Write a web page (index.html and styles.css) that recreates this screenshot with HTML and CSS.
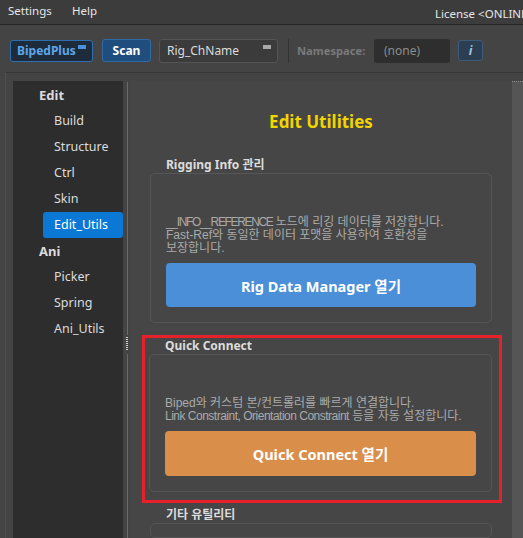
FILE: index.html
```html
<!DOCTYPE html>
<html>
<head>
<meta charset="utf-8">
<link rel="stylesheet" href="styles.css">
</head>
<body>
<div class="app">
  <div class="menubar">
    <div class="menus">
      <span class="menu menu-first">Settings</span>
      <span class="menu">Help</span>
    </div>
    <span class="license">License &lt;ONLINE&gt;</span>
  </div>
  <div class="toolbar">
    <div class="combo combo-blue">BipedPlus<span class="ind ind-blue"></span></div>
    <div class="btn-scan">Scan</div>
    <div class="combo combo-dark">Rig_ChName<span class="ind ind-grey"></span></div>
    <div class="sep"></div>
    <span class="ns-label">Namespace:</span>
    <div class="ns-field">(none)</div>
    <div class="btn-info">i</div>
  </div>
  <div class="main">
    <div class="sidebar">
      <div class="group">Edit</div>
      <div class="item">Build</div>
      <div class="item">Structure</div>
      <div class="item">Ctrl</div>
      <div class="item">Skin</div>
      <div class="item selected">Edit_Utils</div>
      <div class="group">Ani</div>
      <div class="item">Picker</div>
      <div class="item">Spring</div>
      <div class="item">Ani_Utils</div>
    </div>
    <div class="splitter">
      <div class="split-line top"></div>
      <div class="grip"></div>
      <div class="split-line bottom"></div>
    </div>
    <div class="content">
      <div class="title">Edit Utilities</div>
      <div class="sec-label">Rigging Info 관리</div>
      <div class="card">
        <div class="desc"><span class="caps">__INFO__REFERENCE</span> 노드에 리깅 데이터를 저장합니다.<br>Fast-Ref와 동일한 데이터 포맷을 사용하여 호환성을<br>보장합니다.</div>
        <div class="action action-blue">Rig Data Manager 열기</div>
      </div>
      <div class="highlight">
        <div class="sec-label">Quick Connect</div>
        <div class="card">
          <div class="desc">Biped와 커스텀 본/컨트롤러를 빠르게 연결합니다.<br><span class="latin">Link Constraint, Orientation Constraint</span> 등을 자동 설정합니다.</div>
          <div class="action action-orange">Quick Connect 열기</div>
        </div>
      </div>
      <div class="sec-label sec-last">기타 유틸리티</div>
      <div class="card card-open"></div>
    </div>
    <div class="scrollbar"></div>
  </div>
</div>
</body>
</html>
```
FILE: styles.css
```css
html, body {
  margin: 0;
  padding: 0;
}
body {
  width: 523px;
  height: 538px;
  overflow: hidden;
  background: #444444;
  font-family: "Noto Sans", "Noto Sans CJK KR", sans-serif;
  color: #dddddd;
}
.app {
  display: flex;
  flex-direction: column;
  height: 538px;
}
.menubar {
  height: 24px;
  background: #3c3c3c;
  border-bottom: 1px solid #262626;
  display: flex;
  font-size: 11.5px;
  color: #e6e6e6;
}
.menus {
  display: flex;
  flex: 0 0 435px;
  box-sizing: border-box;
  padding-left: 8px;
  line-height: 21px;
}
.menu-first {
  width: 64px;
}
.license {
  flex-shrink: 0;
  line-height: 27px;
  white-space: nowrap;
}
.toolbar {
  height: 47px;
  display: flex;
  align-items: center;
  padding-left: 10px;
  font-size: 12px;
  box-sizing: border-box;
  padding-top: 4px;
}
.combo {
  position: relative;
  height: 22px;
  box-sizing: border-box;
  border-radius: 3px;
  display: flex;
  align-items: center;
}
.combo-blue {
  width: 83px;
  background: #1d2b3b;
  border: 1px solid #2e6fb0;
  color: #5ea6e8;
  font-weight: bold;
  padding-left: 6px;
}
.ind {
  position: absolute;
  width: 8px;
  height: 4px;
  top: 4px;
}
.ind-blue {
  background: #4a92dc;
  right: 6px;
}
.ind-grey {
  background: #a9a9a9;
  right: 6px;
  top: 5px;
}
.btn-scan {
  margin-left: 9px;
  width: 49px;
  height: 23px;
  box-sizing: border-box;
  background: #1f4e7e;
  border: 1px solid #2f6aa5;
  border-radius: 3px;
  color: #ffffff;
  font-weight: bold;
  display: flex;
  align-items: center;
  justify-content: center;
}
.combo-dark {
  margin-left: 8px;
  width: 119px;
  height: 24px;
  background: #3b3b3b;
  border: 1px solid #555555;
  color: #dcdcdc;
  padding-left: 7px;
}
.sep {
  width: 1px;
  height: 24px;
  background: #333333;
  margin-left: 10px;
}
.ns-label {
  margin-left: 8px;
  color: #7a7a7a;
  font-weight: bold;
  font-size: 11.2px;
  width: 70px;
}
.ns-field {
  margin-left: 7px;
  width: 76px;
  height: 24px;
  background: #2e2e2e;
  border-radius: 3px;
  color: #8c8c8c;
  display: flex;
  align-items: center;
  padding-left: 10px;
  box-sizing: border-box;
}
.btn-info {
  margin-left: 8px;
  width: 25px;
  height: 21px;
  box-sizing: border-box;
  background: #2b3e52;
  border: 1px solid #3e5c7a;
  border-radius: 3px;
  color: #a9c3df;
  font-style: italic;
  font-weight: bold;
  display: flex;
  align-items: center;
  justify-content: center;
}
.main {
  flex: 1;
  margin-left: 5px;
  border-top: 1px solid #363636;
  border-left: 1px solid #505050;
  display: flex;
  padding: 8px 0 0 7px;
  min-height: 0;
}
.sidebar {
  width: 110px;
  background: #2d2d2d;
  font-size: 12.5px;
  color: #dcdcdc;
  padding-top: 1px;
}
.group {
  height: 26px;
  line-height: 26px;
  padding-left: 26px;
  font-weight: bold;
  font-size: 13px;
}
.item {
  height: 26px;
  line-height: 26px;
  padding-left: 41px;
}
.item.selected {
  margin-left: 30px;
  padding-left: 11px;
  background: #0a78d4;
  border-radius: 3px;
  color: #ffffff;
}
.splitter {
  width: 8px;
  display: flex;
  flex-direction: column;
  align-items: center;
}
.split-line {
  width: 1px;
  background: #6a6a6a;
}
.split-line.top {
  height: 253px;
  margin-top: 1px;
}
.split-line.bottom {
  flex: 1;
  margin-top: 3px;
}
.grip {
  width: 2px;
  height: 14px;
  margin-top: 2px;
  background: repeating-linear-gradient(to bottom, #cfcfcf 0, #cfcfcf 1px, transparent 1px, transparent 2px);
}
.content {
  width: 381px;
  background: #464646;
  padding: 29px 20px 0 19px;
  box-sizing: border-box;
  display: flex;
  flex-direction: column;
  overflow: hidden;
}
.title {
  text-align: center;
  color: #f2d400;
  font-weight: bold;
  font-size: 17px;
  line-height: 24px;
  height: 24px;
  margin-bottom: 23px;
}
.sec-label {
  font-size: 12px;
  font-weight: bold;
  color: #dcdcdc;
  line-height: 16px;
  height: 16px;
  padding-left: 16px;
}
.card {
  border: 1px solid #565656;
  border-radius: 5px;
  padding: 42px 15px 15px 15px;
}
.desc {
  font-family: "Liberation Sans", "Noto Sans CJK KR", sans-serif;
  font-size: 12px;
  line-height: 13px;
  color: #aaaaaa;
  margin-bottom: 8px;
  white-space: nowrap;
}
.caps {
  letter-spacing: -1.35px;
}
.latin {
  letter-spacing: -0.5px;
}
.action {
  height: 44px;
  border-radius: 4px;
  display: flex;
  align-items: center;
  justify-content: center;
  font-size: 14.5px;
  font-weight: bold;
  color: #ffffff;
}
.action-blue {
  background: #4a8fd8;
}
.action-orange {
  background: #d98e4a;
  height: 45px;
}
.highlight {
  margin: 12px -10px 0 -8px;
  border: 3px solid #e8202a;
  padding: 0 7px 8px 4px;
}
.sec-last {
  margin-top: 4px;
}
.card-open {
  height: 40px;
  padding: 0;
}
.scrollbar {
  width: 11px;
  background: #555555;
  border-top: 1px dotted #888888;
}
```
